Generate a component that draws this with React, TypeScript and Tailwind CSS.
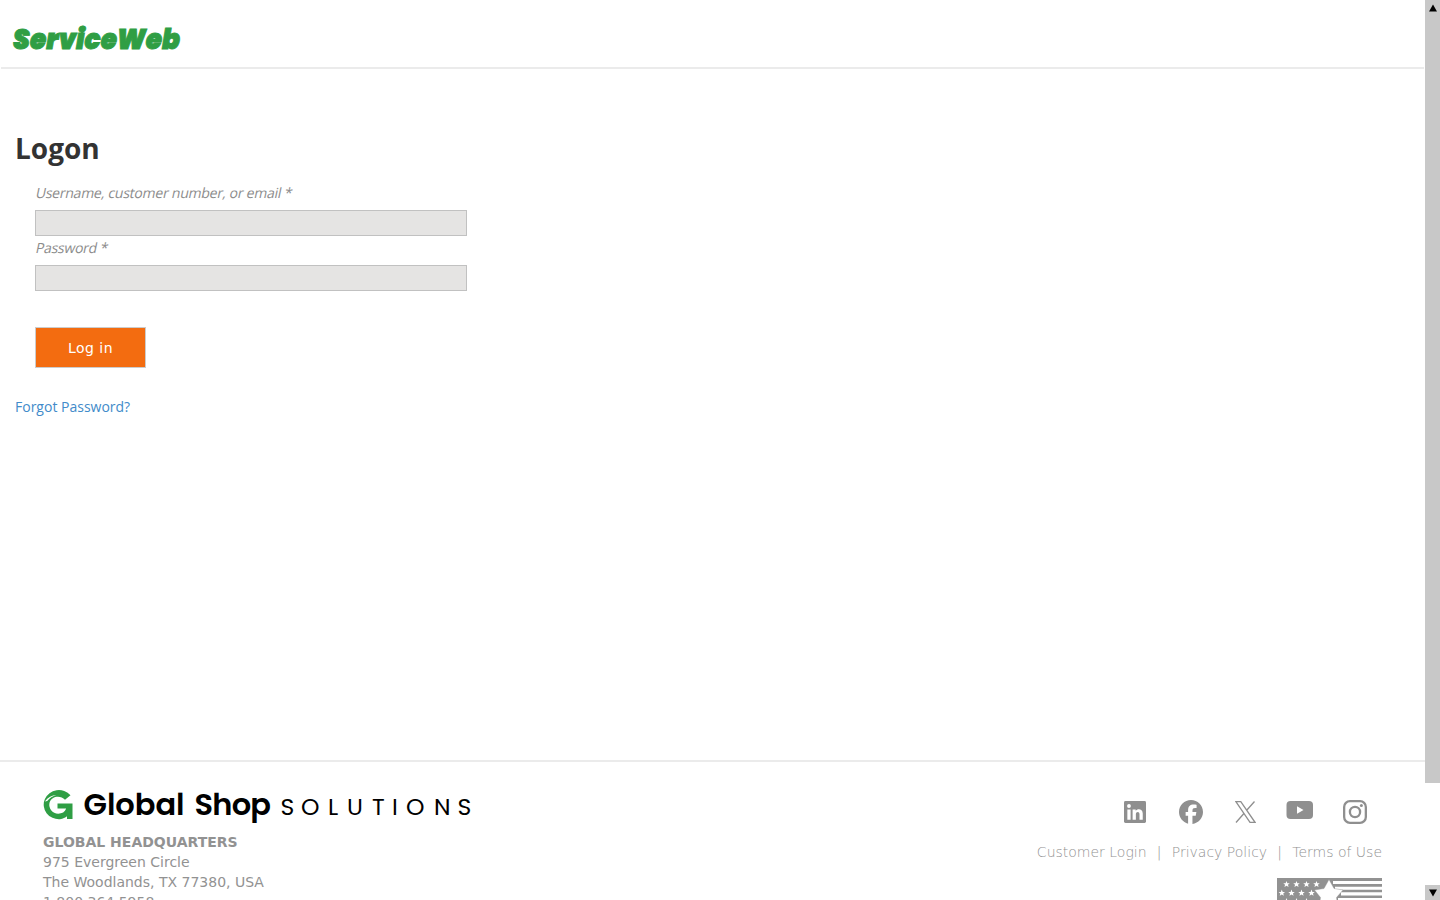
import { FaFacebook } from "react-icons/fa6";

const offices = ["975 Evergreen Circle", "The Woodlands, TX 77380, USA", "1.800.364.5958"];

const footerLinks = ["Customer Login", "Privacy Policy", "Terms of Use"];

const star = "M0 -2.6L0.7 -0.8L2.5 -0.8L1.1 0.3L1.6 2.1L0 1.1L-1.6 2.1L-1.1 0.3L-2.5 -0.8L-0.7 -0.8Z";

function ServiceWebLogo() {
  return (
    <svg width="190" height="40" viewBox="0 0 190 40" className="block" role="img">
      <text
        x="1"
        y="32"
        textLength="167"
        lengthAdjust="spacingAndGlyphs"
        className="fill-[#2f9e44] stroke-[#2f9e44] stroke-[0.9] font-['Poppins','Inter',sans-serif] text-[28px] font-black italic"
      >
        ServiceWeb
      </text>
    </svg>
  );
}

function CompanyLogo() {
  return (
    <svg width="430" height="40" viewBox="0 0 430 40" className="block" role="img">
      <path
        d="M27.5 10.2A15.2 14.6 0 1 0 17 34.2C20 33.8 22.4 32.6 24 31.2V34H29.5V18.5H14.5V23.6H23.2C22 27 19 28.8 15.2 28.8A9 9 0 0 1 6.6 17.5C8.5 11.2 17.5 9.8 22 14.8Z"
        fill="#2f9e44"
      />
      <path d="M1.8 16.6C4.8 12.4 9 10.4 13.4 10C9.6 11.2 6.6 12.8 4.2 16Z" fill="white" />
      <text
        x="40.5"
        y="30"
        textLength="101"
        lengthAdjust="spacing"
        className="fill-black font-['Poppins','Inter',sans-serif] text-[30.5px] font-semibold"
      >
        Global
      </text>
      <text
        x="151.5"
        y="30"
        textLength="76.5"
        lengthAdjust="spacing"
        className="fill-black font-['Poppins','Inter',sans-serif] text-[30.5px] font-semibold"
      >
        Shop
      </text>
      <text
        x="237.5 258 285 304 329 349 363 391 414.5"
        y="30"
        className="fill-black font-['Poppins','Lato',sans-serif] text-[23.5px]"
      >
        SOLUTIONS
      </text>
    </svg>
  );
}

function SocialLinks() {
  return (
    <div className="flex items-start text-[#8f8f8f]">
      <svg width="22" height="22" viewBox="0 0 23 23" className="mt-px mr-[33px]">
        <rect width="23" height="23" rx="1.5" fill="currentColor" />
        <g fill="white">
          <circle cx="5.2" cy="5.2" r="2" />
          <path d="M3.5 8.8H6.9V19.5H3.5ZM9 8.8H12.2V10.3C13.9 7.5 19.6 7.8 19.6 13V19.5H16.2V13.8C16.2 10.4 12.4 10.8 12.4 13.8V19.5H9Z" />
        </g>
      </svg>
      <FaFacebook size={24} className="mr-8" />
      <svg width="21" height="22" viewBox="0 0 21 22" fill="none" stroke="currentColor" strokeWidth="1.3" className="mt-px mr-[30px]">
        <path d="M0.9 0.7H5.8L20 21.3H15ZM19.5 0.5L11.7 9.2M8.7 12.7L1 21.5" />
      </svg>
      <svg width="27" height="19" viewBox="0 0 27 19" className="mt-px mr-[30px]">
        <rect x="0.5" width="26.5" height="18" rx="4" fill="currentColor" />
        <path d="M11 5.2L17.5 9L11 12.8Z" fill="white" />
      </svg>
      <svg width="24" height="24" viewBox="0 0 24 24" fill="none" stroke="currentColor" strokeWidth="2.3">
        <rect x="1.15" y="1.15" width="21.7" height="21.7" rx="5.8" />
        <circle cx="12" cy="12" r="5.1" />
        <circle cx="18.4" cy="5.6" r="1.5" fill="currentColor" stroke="none" />
      </svg>
    </div>
  );
}

function Flag() {
  return (
    <svg width="105" height="60" viewBox="0 0 105 60" className="block">
      <rect width="105" height="60" fill="#929292" />
      <g fill="white">
        <path d="M56 3H105V6H56ZM58 8.7H105V11.8H58ZM64 14.3H105V17.4H64ZM61 20H105V23H61Z" />
        {[9.5, 19.5, 29.5, 39.5].map((x) => (
          <path key={x} d={star} transform={`translate(${x} 6.3) scale(1.3)`} />
        ))}
        {[4.8, 14.5, 24.5, 34.5].map((x) => (
          <path key={x} d={star} transform={`translate(${x} 15) scale(1.3)`} />
        ))}
        {[9.5, 19.5, 29.5].map((x) => (
          <path key={x} d={star} transform={`translate(${x} 23.5) scale(1.3)`} />
        ))}
        <path
          d="M52 1.5L57 10.5L66 12L59.5 19.5L61 30L52 25.5L42 30L43.5 19.5L37.5 12L47 10.5Z"
          stroke="#929292"
          strokeWidth="0.4"
        />
      </g>
    </svg>
  );
}

function Scrollbar() {
  return (
    <div className="flex w-[15px] shrink-0 flex-col justify-between">
      <div className="h-[783px] bg-[#c8c8c8]">
        <svg width="15" height="15" viewBox="0 0 15 15">
          <path d="M8 4.5L12 11.5H4Z" />
        </svg>
      </div>
      <div className="h-[15px] bg-[#c8c8c8]">
        <svg width="15" height="15" viewBox="0 0 15 15" className="block">
          <path d="M4 4.5H12L8 11.5Z" />
        </svg>
      </div>
    </div>
  );
}

function Field({ id, label, type }: { id: string; label: string; type: string }) {
  return (
    <div className="h-[55px]">
      <label htmlFor={id} className="flex h-[27px] pl-[0.5px] text-[14px] leading-5 tracking-[-0.23px] text-[#8c8c8c]">
        <span className="h-5 -skew-x-12">{label} *</span>
      </label>
      <input
        id={id}
        type={type}
        className="block h-[26px] w-[432px] border border-[#c1c1c1] bg-[#e5e4e3] px-2 outline-none"
      />
    </div>
  );
}

export default function App() {
  return (
    <div className="flex h-screen overflow-hidden bg-white font-['Open_Sans',sans-serif]">
      <div className="flex min-w-0 flex-1 flex-col">
        <header className="mr-px ml-px h-[69px] shrink-0 border-b-2 border-[#ebebeb] pt-[17px] pl-[11px]">
          <ServiceWebLogo />
        </header>

        <main className="h-[691px] shrink-0 px-[15px] pt-[59px]">
          <h1 className="text-[28px] leading-10 font-bold text-[#333333]">Logon</h1>
          <form className="mt-[15px] pl-5">
            <Field id="username" label="Username, customer number, or email" type="text" />
            <Field id="password" label="Password" type="password" />
            <button
              type="button"
              className="mt-[34px] block h-[41px] w-[111px] border border-[#cccccc] bg-[#f36c10] pt-0.5 font-['DejaVu_Sans'] text-[14px] tracking-[0.5px] text-white"
            >
              Log in
            </button>
          </form>
          <a href="#" className="mt-[29px] inline-block text-[14px] leading-5 text-[#428bca]">
            Forgot Password?
          </a>
        </main>

        <footer className="flex h-[240px] shrink-0 justify-between border-t-2 border-[#ebebeb] px-[43px] font-['DejaVu_Sans'] text-[14px] text-[#929292]">
          <div className="pt-[23px]">
            <CompanyLogo />
            <address className="mt-[7px] leading-5 not-italic">
              <p className="font-bold">GLOBAL HEADQUARTERS</p>
              {offices.map((line) => (
                <p key={line}>{line}</p>
              ))}
            </address>
          </div>
          <div className="flex flex-col items-end pt-[38px]">
            <div className="mr-[15px] h-[42px]">
              <SocialLinks />
            </div>
            <nav className="flex leading-5 font-extralight">
              {footerLinks.map((link, index) => (
                <span key={link} className="flex">
                  {index > 0 && <span className="mx-[10.2px]">|</span>}
                  <a href="#">{link}</a>
                </span>
              ))}
            </nav>
            <div className="mt-4">
              <Flag />
            </div>
          </div>
        </footer>
      </div>
      <Scrollbar />
    </div>
  );
}
